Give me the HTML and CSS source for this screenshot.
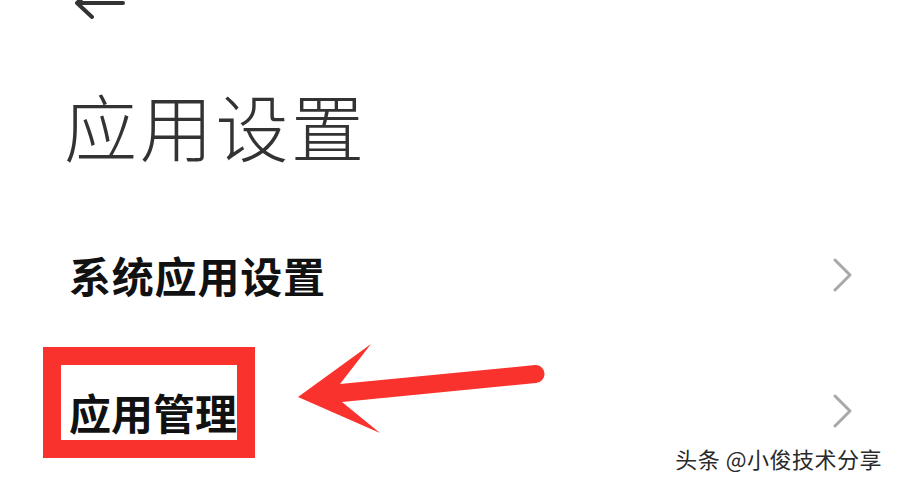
FILE: index.html
```html
<!DOCTYPE html>
<html lang="zh-CN">
<head>
<meta charset="utf-8">
<title>应用设置</title>
<link rel="stylesheet" href="styles.css">
</head>
<body>
<div class="page">
  <header class="topbar">
    <svg class="back" width="60" height="22" viewBox="0 0 60 22" aria-label="返回">
      <path d="M17 -11 L2 3 L17 17 M2 3 H48" fill="none" stroke="#333" stroke-width="4" stroke-linecap="round" stroke-linejoin="round"/>
    </svg>
  </header>
  <h1 class="title">应用设置</h1>
  <ul class="list">
    <li class="row row-first">
      <span class="label">系统应用设置</span>
      <svg class="chev" width="20" height="34" viewBox="0 0 20 34"><path d="M3 2 L18 17 L3 32" fill="none" stroke="#a8a8a8" stroke-width="3" stroke-linecap="round" stroke-linejoin="round"/></svg>
    </li>
    <li class="row row-second">
      <span class="highlight"><span class="label">应用管理</span></span>
      <svg class="chev chev-low" width="20" height="34" viewBox="0 0 20 34"><path d="M3 2 L18 17 L3 32" fill="none" stroke="#a8a8a8" stroke-width="3" stroke-linecap="round" stroke-linejoin="round"/></svg>
    </li>
  </ul>
  <svg class="pointer" width="898" height="487" viewBox="0 0 898 487">
    <path d="M298 397 L371 344 L340 384 L535 365 A9 9 0 0 1 536 383 L342 402 L380 433 Z" fill="#f9322d"/>
  </svg>
  <div class="watermark">头条 @小俊技术分享</div>
</div>
</body>
</html>
```
FILE: styles.css
```css
html, body {
  margin: 0;
  padding: 0;
  background: #ffffff;
}
body {
  font-family: "Noto Sans CJK SC", "Noto Sans", sans-serif;
  color: #222;
}
.page {
  position: relative;
  width: 898px;
  height: 487px;
  overflow: hidden;
  padding: 0 46px 0 43px;
  box-sizing: border-box;
}
.topbar {
  display: flex;
  height: 22px;
  padding-left: 32px;
}
.back {
  display: block;
}
.title {
  margin: 66px 0 0 21px;
  font-size: 73px;
  line-height: 73px;
  font-weight: 300;
  color: #333;
  letter-spacing: 2.7px;
}
.list {
  list-style: none;
  margin: 0;
  padding: 0;
}
.row {
  display: flex;
  align-items: center;
  justify-content: space-between;
}
.row-first {
  height: 88px;
  margin-top: 70px;
  padding-left: 26px;
}
.row-second {
  margin-top: 28px;
}
.label {
  font-size: 42px;
  line-height: 42px;
  font-weight: 700;
  color: #111;
  white-space: nowrap;
  letter-spacing: 0.8px;
}
.chev {
  display: block;
}
.chev-low {
  margin-top: 16px;
}
.highlight {
  display: block;
  width: 212px;
  height: 111px;
  border: 18px solid #f9322d;
  padding: 26px 0 0 8px;
  box-sizing: border-box;
  overflow: hidden;
}
.highlight .label {
  display: block;
  letter-spacing: 0;
}
.pointer {
  position: absolute;
  left: 0;
  top: 0;
  pointer-events: none;
}
.watermark {
  position: absolute;
  right: 16px;
  bottom: 17px;
  font-size: 22px;
  line-height: 24px;
  color: #2a2a2a;
  letter-spacing: 0.5px;
  text-shadow: 1px 1px 0 #fff, -1px -1px 0 #fff, 1px -1px 0 #fff, -1px 1px 0 #fff;
}
```
